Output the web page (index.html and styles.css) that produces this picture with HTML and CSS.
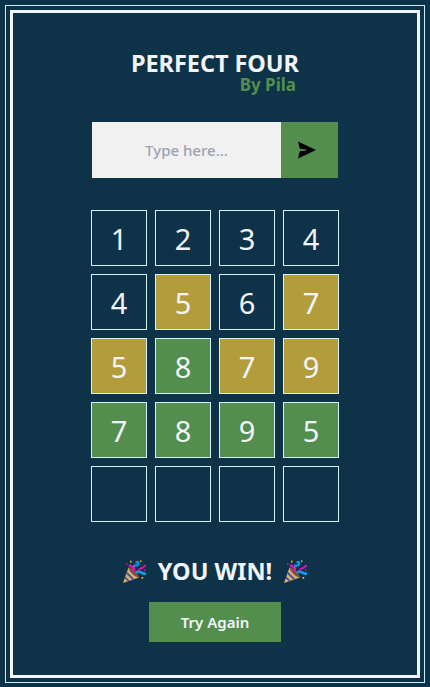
FILE: index.html
```
<!DOCTYPE html>
<html lang="en">
<head>
<meta charset="utf-8">
<title>Perfect Four</title>
<link rel="stylesheet" href="styles.css">
</head>
<body>
<svg class="defs" aria-hidden="true">
  <symbol id="popper" viewBox="0 0 26 26">
    <path d="M6.5 8.5 L1 24 L17 18.5 Z" fill="#dcb070"/>
    <path d="M5 12.8 L12.3 20.1 L10.4 20.8 L4.2 14.8Z M3.3 17.6 L7.6 21.7 L5.9 22.3 L2.7 19.4Z" fill="#48529a"/>
    <path d="M6.5 8.5 C10 8 17 14.5 17 18.5 C13 18.5 7 12.5 6.5 8.5Z" fill="#7a5040"/>
    <path d="M11 12.5 C14 9.5 10 8 7 6" fill="none" stroke="#e012b0" stroke-width="2.5"/>
    <path d="M12 8.5 C12 4 16 9 16.3 4.2 C16.3 2.5 14.5 2.5 14 4" fill="none" stroke="#168fe0" stroke-width="2.4"/>
    <path d="M14 14 C17 10 18 15 24 14.8" fill="none" stroke="#1599e8" stroke-width="2.8"/>
    <path d="M16 11.2 C18 11 17 9 20 9 C22 9 21 7 24 6.5" fill="none" stroke="#e012b0" stroke-width="2"/>
    <path d="M8 1.8h1.6v1.6H8z M18 1.6h1.5v1.5H18z M19.5 18h1.7v1.7h-1.7z" fill="#e9b84b"/>
    <path d="M4 4.5h1.6v1.6H4z M22 10.5h1.5v1.3H22z" fill="#e012b0"/>
  </symbol>
</svg>
<div class="frame">
  <main class="game">
    <header class="heading">
      <h1 class="title">PERFECT FOUR</h1>
      <p class="author">By Pila</p>
    </header>
    <form class="guess">
      <input class="guess-input" type="text" placeholder="Type here..." aria-label="Guess">
      <button class="send" type="button" aria-label="Send">
        <svg width="18" height="18" viewBox="0 0 18 18"><path d="M0 0.5 L18 9 L0 17.5 L1.8 10.3 L8.5 9.5 L8.5 8.5 L1.8 7.7 Z"/></svg>
      </button>
    </form>
    <section class="board">
      <div class="cell">1</div><div class="cell">2</div><div class="cell">3</div><div class="cell">4</div>
      <div class="cell">4</div><div class="cell near">5</div><div class="cell">6</div><div class="cell near">7</div>
      <div class="cell near">5</div><div class="cell hit">8</div><div class="cell near">7</div><div class="cell near">9</div>
      <div class="cell hit">7</div><div class="cell hit">8</div><div class="cell hit">9</div><div class="cell hit">5</div>
      <div class="cell"></div><div class="cell"></div><div class="cell"></div><div class="cell"></div>
    </section>
    <div class="result">
      <svg class="popper"><use href="#popper"/></svg>
      <h2 class="message">YOU WIN!</h2>
      <svg class="popper"><use href="#popper"/></svg>
    </div>
    <button class="retry" type="button">Try Again</button>
  </main>
</div>
</body>
</html>
```
FILE: styles.css
```
* { box-sizing: border-box; margin: 0; }
body {
  height: 687px;
  padding: 5px 5px 4px;
  overflow: hidden;
  background: #0e3248;
  color: #f1f5f9;
  font-family: "Noto Sans", "Open Sans", sans-serif;
}
.defs { display: none; }
.frame {
  height: 678px;
  padding: 4px;
  border: 1px solid #c5f1ff;
}
.game {
  height: 668px;
  border: 3px solid #f0f6ff;
  display: flex;
  flex-direction: column;
  align-items: center;
}
.heading {
  width: 168px;
  margin-top: 39px;
}
.title {
  font-size: 23.5px;
  line-height: 22px;
  font-weight: 700;
  letter-spacing: -0.07px;
  white-space: nowrap;
}
.author {
  margin-top: 3px;
  padding-right: 3px;
  text-align: right;
  color: #538e4f;
  font-size: 17px;
  line-height: 16px;
  font-weight: 700;
  letter-spacing: 0;
  white-space: nowrap;
}
.guess {
  display: flex;
  width: 246px;
  height: 56px;
  margin-top: 29px;
}
.guess-input {
  width: 189px;
  padding: 0;
  border: 0;
  border-radius: 0;
  background: #f1f1f1;
  font: 500 15px "Noto Sans", sans-serif;
  text-align: center;
}
.guess-input::placeholder { color: #9ca3af; }
.send {
  width: 57px;
  padding: 0 5px 0 0;
  border: 0;
  background: #538e4f;
  display: flex;
  align-items: center;
  justify-content: center;
}
.board {
  display: grid;
  grid-template-columns: repeat(4, 56px);
  grid-auto-rows: 56px;
  gap: 8px;
  margin-top: 32px;
}
.cell {
  display: flex;
  align-items: center;
  justify-content: center;
  padding-top: 1px;
  border: 1px solid #d3f3fb;
  font-size: 29px;
  line-height: 40px;
}
.near { background: #b39d3b; }
.hit { background: #538e4f; }
.result {
  display: flex;
  align-items: center;
  justify-content: space-between;
  width: 187px;
  height: 30px;
  margin-top: 35px;
}
.popper { width: 26px; height: 26px; }
.message {
  padding-bottom: 2px;
  font-size: 23.5px;
  line-height: 30px;
  font-weight: 700;
  letter-spacing: 0;
  white-space: nowrap;
}
.retry {
  width: 132px;
  height: 40px;
  margin-top: 15px;
  padding: 0;
  border: 0;
  background: #538e4f;
  color: #f1f5f9;
  font: 600 15px "Noto Sans", sans-serif;
}
```
